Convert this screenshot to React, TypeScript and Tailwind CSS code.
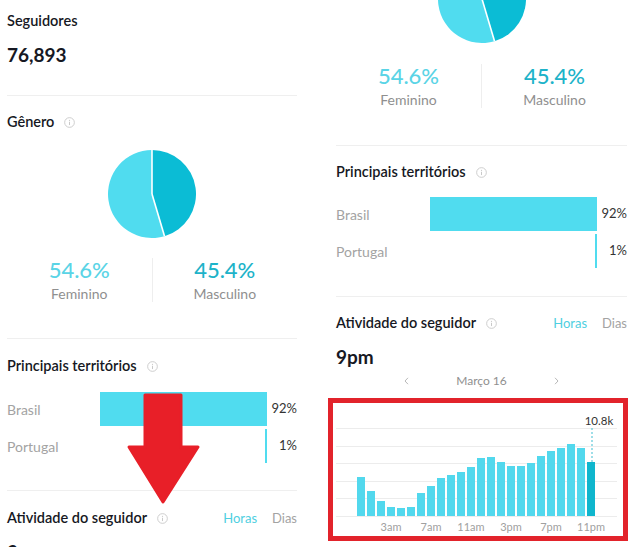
import React from "react";

const FONT = { fontFamily: "Lato, 'Open Sans', Arial, sans-serif" };

function InfoIcon() {
  return (
    <svg width="11" height="11" viewBox="0 0 12 12" className="ml-[10px] shrink-0">
      <circle cx="6" cy="6" r="5.3" fill="none" stroke="#c9c9c9" strokeWidth="1" />
      <line x1="6" y1="5.2" x2="6" y2="8.8" stroke="#c9c9c9" strokeWidth="1.1" />
      <circle cx="6" cy="3.6" r="0.7" fill="#c9c9c9" />
    </svg>
  );
}

function Divider() {
  return <div className="h-px bg-[#efefef] w-full" />;
}

function Pie({ partial }: { partial?: boolean }) {
  const cx = 44, cy = 44, r = 44;
  const ang = 0.454 * 2 * Math.PI;
  const x2 = cx + r * Math.sin(ang);
  const y2 = cy - r * Math.cos(ang);
  return (
    <svg
      width="88"
      height={partial ? 43 : 88}
      viewBox={partial ? "0 45 88 43" : "0 0 88 88"}
      className="block mx-auto"
    >
      <path d={`M${cx} ${cy} L${cx} ${cy - r} A${r} ${r} 0 0 1 ${x2} ${y2} Z`} fill="#0bbcd5" />
      <path d={`M${cx} ${cy} L${x2} ${y2} A${r} ${r} 0 1 1 ${cx} ${cy - r} Z`} fill="#50dcef" />
      <line x1={cx} y1={cy} x2={cx} y2={cy - r} stroke="#fff" strokeWidth="1.6" />
      <line x1={cx} y1={cy} x2={x2} y2={y2} stroke="#fff" strokeWidth="1.6" />
    </svg>
  );
}

function Stats() {
  return (
    <div className="flex h-[44px]">
      <div className="flex-1 flex flex-col items-center">
        <div className="text-[22px] leading-[24px] font-medium text-[#5ad4e6]">54.6%</div>
        <div className="mt-[3px] text-[14px] leading-[18px] text-[#8f8f8f]">Feminino</div>
      </div>
      <div className="w-px bg-[#eeeeee]" />
      <div className="flex-1 flex flex-col items-center">
        <div className="text-[22px] leading-[24px] font-medium text-[#1db3c9]">45.4%</div>
        <div className="mt-[3px] text-[14px] leading-[18px] text-[#8f8f8f]">Masculino</div>
      </div>
    </div>
  );
}

function Heading({ children, info = true }: { children: React.ReactNode; info?: boolean }) {
  return (
    <div className="flex items-center text-[14.5px] leading-[20px] font-semibold text-[#161823]">
      <span>{children}</span>
      {info && <InfoIcon />}
    </div>
  );
}

function Territories() {
  const rows = [
    { name: "Brasil", pct: 92 },
    { name: "Portugal", pct: 1 },
  ];
  return (
    <div className="flex flex-col gap-[3px]">
      {rows.map((r) => (
        <div key={r.name} className="flex h-[34px] items-center">
          <div className="flex-1 text-[14px] text-[#a3a3a3]">{r.name}</div>
          <div className="w-[181px] h-full flex justify-end">
            <div className="h-full bg-[#50dcef]" style={{ width: Math.max(2, (181 * r.pct) / 100) }} />
          </div>
          <div className="w-[30px] text-right text-[13px] text-[#333]">{r.pct}%</div>
        </div>
      ))}
    </div>
  );
}

function ActivityHeader() {
  return (
    <div className="flex items-center justify-between">
      <Heading>Atividade do seguidor</Heading>
      <div className="flex gap-[15px] text-[13px] leading-[20px]">
        <span className="text-[#4fcfe1]">Horas</span>
        <span className="text-[#a3a3a3]">Dias</span>
      </div>
    </div>
  );
}

function Chart() {
  const tops = [477, 491, 501, 507, 508, 507, 493, 486, 478, 475, 472, 467, 458, 457, 462, 466, 466, 463, 456, 451, 448, 444, 448, 462];
  const oy = 403;
  const base = 516 - oy;
  const grid = [428, 446, 463, 481, 498, 516].map((y) => y - oy);
  const labels = [
    { t: "3am", i: 3 },
    { t: "7am", i: 7 },
    { t: "11am", i: 11 },
    { t: "3pm", i: 15 },
    { t: "7pm", i: 19 },
    { t: "11pm", i: 23 },
  ];
  return (
    <div className="-ml-[8px] w-[300px] h-[143px] border-[5px] border-[#e2232b]">
      <svg width="290" height="133" viewBox="0 0 290 133" className="block" style={FONT}>
        {grid.map((y, k) => (
          <line key={k} x1="3" x2="284" y1={y + 0.5} y2={y + 0.5} stroke="#ececec" strokeWidth="1" />
        ))}
        {tops.map((t, i) => (
          <rect
            key={i}
            x={24 + i * 10}
            y={t - oy}
            width="8"
            height={base - (t - oy)}
            fill={i === 23 ? "#0fb6cd" : "#52d8ed"}
          />
        ))}
        <line x1="259" x2="259" y1="25" y2={tops[23] - oy} stroke="#5fc9d9" strokeWidth="1.2" strokeDasharray="2 2" />
        <text x="266" y="22" textAnchor="middle" fontSize="11.5" fill="#333">10.8k</text>
        {labels.map((l) => (
          <text key={l.t} x={28 + l.i * 10} y="128" textAnchor="middle" fontSize="11" fill="#a0a0a0">
            {l.t}
          </text>
        ))}
      </svg>
    </div>
  );
}

function Chevron({ dir }: { dir: "l" | "r" }) {
  return (
    <svg width="5" height="8" viewBox="0 0 5 8">
      <path
        d={dir === "l" ? "M4 0.8 L1 4 L4 7.2" : "M1 0.8 L4 4 L1 7.2"}
        fill="none"
        stroke="#b8b8b8"
        strokeWidth="1"
      />
    </svg>
  );
}

export default function App() {
  return (
    <div className="relative w-[633px] h-[547px] overflow-hidden bg-white flex" style={FONT}>
      {/* Left panel */}
      <div className="ml-[7px] w-[290px] flex flex-col">
        <div className="pt-[11px] text-[14.5px] leading-[20px] font-semibold text-[#161823]">Seguidores</div>
        <div className="mt-[12px] text-[19px] leading-[24px] font-bold text-[#161823]">76,893</div>
        <div className="mt-[28px]">
          <Divider />
        </div>
        <div className="mt-[16px]">
          <Heading>Gênero</Heading>
        </div>
        <div className="mt-[18px]">
          <Pie />
        </div>
        <div className="mt-[20px]">
          <Stats />
        </div>
        <div className="mt-[36px]">
          <Divider />
        </div>
        <div className="mt-[17px]">
          <Heading>Principais territórios</Heading>
        </div>
        <div className="mt-[16px]">
          <Territories />
        </div>
        <div className="mt-[27px]">
          <Divider />
        </div>
        <div className="mt-[17px]">
          <ActivityHeader />
        </div>
        <div className="mt-[12px] text-[19px] leading-[24px] font-bold text-[#161823]">9pm</div>
      </div>

      {/* Right panel */}
      <div className="ml-[39px] w-[291px] flex flex-col">
        <Pie partial />
        <div className="mt-[21px]">
          <Stats />
        </div>
        <div className="mt-[37px]">
          <Divider />
        </div>
        <div className="mt-[16px]">
          <Heading>Principais territórios</Heading>
        </div>
        <div className="mt-[15px]">
          <Territories />
        </div>
        <div className="mt-[28px]">
          <Divider />
        </div>
        <div className="mt-[16px]">
          <ActivityHeader />
        </div>
        <div className="mt-[12px] text-[19px] leading-[24px] font-bold text-[#161823]">9pm</div>
        <div className="mt-[4px] flex items-center justify-center gap-[47px] h-[16px]">
          <Chevron dir="l" />
          <span className="text-[12px] leading-[16px] text-[#8f8f8f]">Março 16</span>
          <Chevron dir="r" />
        </div>
        <div className="mt-[9px]">
          <Chart />
        </div>
      </div>

      {/* Red arrow overlay */}
      <svg className="absolute left-[126px] top-[392px]" width="76" height="114" viewBox="126 392 76 114">
        <polygon
          points="145,395 181,395 181,447 198,447 163,502 129,447 145,447"
          fill="#e81f28"
          stroke="#e81f28"
          strokeWidth="3"
          strokeLinejoin="round"
        />
      </svg>
    </div>
  );
}
